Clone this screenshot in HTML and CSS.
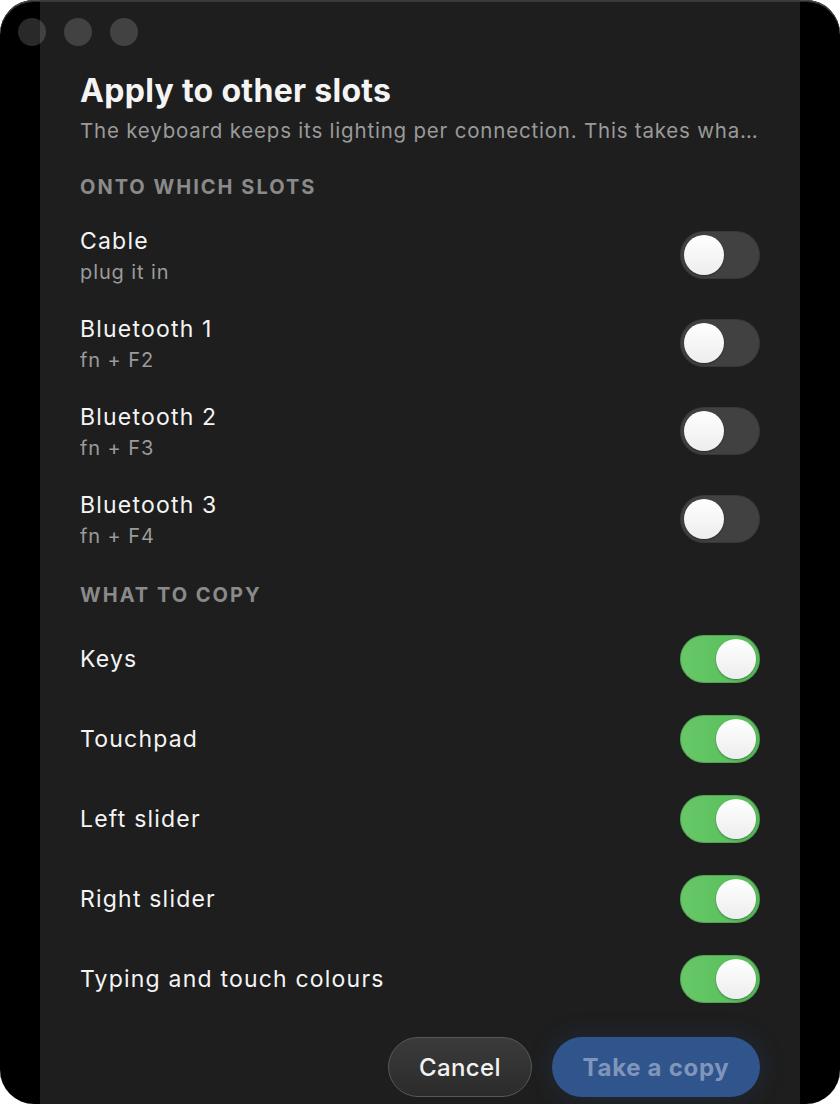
FILE: index.html
```html
<!DOCTYPE html>
<html>
<head>
<meta charset="utf-8">
<link rel="stylesheet" href="styles.css">
</head>
<body>
<div class="window">
  <div class="lights"><span></span><span></span><span></span></div>
  <div class="panel">
    <h1 class="title">Apply to other slots</h1>
    <p class="subtitle">The keyboard keeps its lighting per connection. This takes wha…</p>

    <h2 class="section">Onto which slots</h2>
    <div class="rows slots">
      <div class="row"><div class="text"><div class="label">Cable</div><div class="sub">plug it in</div></div><div class="toggle"></div></div>
      <div class="row"><div class="text"><div class="label">Bluetooth 1</div><div class="sub">fn + F2</div></div><div class="toggle"></div></div>
      <div class="row"><div class="text"><div class="label">Bluetooth 2</div><div class="sub">fn + F3</div></div><div class="toggle"></div></div>
      <div class="row"><div class="text"><div class="label">Bluetooth 3</div><div class="sub">fn + F4</div></div><div class="toggle"></div></div>
    </div>

    <h2 class="section second">What to copy</h2>
    <div class="rows copy">
      <div class="row"><div class="label">Keys</div><div class="toggle on"></div></div>
      <div class="row"><div class="label">Touchpad</div><div class="toggle on"></div></div>
      <div class="row"><div class="label">Left slider</div><div class="toggle on"></div></div>
      <div class="row"><div class="label">Right slider</div><div class="toggle on"></div></div>
      <div class="row"><div class="label">Typing and touch colours</div><div class="toggle on"></div></div>
    </div>

    <div class="actions">
      <button class="btn cancel">Cancel</button>
      <button class="btn primary" disabled>Take a copy</button>
    </div>
  </div>
</div>
</body>
</html>
```

FILE: styles.css
```css
html, body {
  margin: 0;
  padding: 0;
  background: #ffffff;
}
body {
  font-family: Inter, "Noto Sans", "Liberation Sans", sans-serif;
  -webkit-font-smoothing: antialiased;
}
.window {
  position: relative;
  width: 840px;
  height: 1104px;
  border-radius: 34px;
  background: #000;
  overflow: hidden;
  box-shadow: inset 0 1px 0 #4a4a4a, inset 0 2px 0 #2a2a2a;
}
.lights {
  position: absolute;
  left: 18px;
  top: 18px;
  display: flex;
  gap: 18px;
  z-index: 2;
}
.lights span {
  width: 28px;
  height: 28px;
  border-radius: 50%;
  background: rgba(255, 255, 255, 0.16);
}
.panel {
  margin: 0 40px;
  height: 100%;
  box-sizing: border-box;
  background: #1e1e1e;
  border-top: 2px solid #3a3a3a;
  padding: 69px 40px 0;
  display: flex;
  flex-direction: column;
}
.title {
  margin: 0;
  font-size: 32px;
  line-height: 40px;
  font-weight: 700;
  color: #f4f4f4;
  letter-spacing: 0.3px;
}
.subtitle {
  margin: 6px 0 0;
  font-size: 20.5px;
  line-height: 28px;
  color: #9a9a9a;
  letter-spacing: 0.8px;
  white-space: nowrap;
}
.section {
  margin: 30px 0 12px;
  font-size: 20px;
  line-height: 24px;
  font-weight: 700;
  color: #8a8a8a;
  text-transform: uppercase;
  letter-spacing: 2px;
}
.section.second {
  margin-top: 20px;
}
.rows {
  display: flex;
  flex-direction: column;
}
.row {
  display: flex;
  align-items: center;
  justify-content: space-between;
}
.slots .row {
  height: 88px;
}
.copy .row {
  height: 80px;
}
.text {
  display: flex;
  flex-direction: column;
  gap: 3px;
  padding-top: 3px;
}
.label {
  font-size: 23px;
  line-height: 28px;
  color: #f4f4f4;
  letter-spacing: 1.2px;
}
.sub {
  font-size: 20px;
  line-height: 28px;
  color: #9b9b9b;
  letter-spacing: 0.9px;
}
.toggle {
  position: relative;
  width: 80px;
  height: 48px;
  border-radius: 24px;
  background: #414141;
  box-shadow: inset 0 0 0 1px rgba(0, 0, 0, 0.15);
  flex: none;
}
.toggle::after {
  content: "";
  position: absolute;
  left: 4px;
  top: 4px;
  width: 40px;
  height: 40px;
  border-radius: 50%;
  background: linear-gradient(#ffffff, #ededed);
  box-shadow: 0 1px 2px rgba(0, 0, 0, 0.35);
}
.toggle.on {
  background: linear-gradient(90deg, #66c866, #58bb5c);
}
.toggle.on::after {
  left: 36px;
}
.actions {
  display: flex;
  justify-content: flex-end;
  gap: 20px;
  margin-top: 18px;
}
.btn {
  height: 60px;
  border-radius: 30px;
  font-family: inherit;
  font-size: 24px;
  padding: 0;
}
.cancel {
  width: 144px;
  background: linear-gradient(#3b3b3b, #2b2b2b);
  border: 1px solid #585858;
  color: #f2f2f2;
  font-weight: 500;
  letter-spacing: 0.4px;
}
.primary {
  width: 208px;
  border: none;
  background: #30558c;
  color: #7f96ba;
  font-weight: 700;
  letter-spacing: 0.7px;
  box-shadow: 0 0 24px rgba(40, 75, 130, 0.3);
}
```
